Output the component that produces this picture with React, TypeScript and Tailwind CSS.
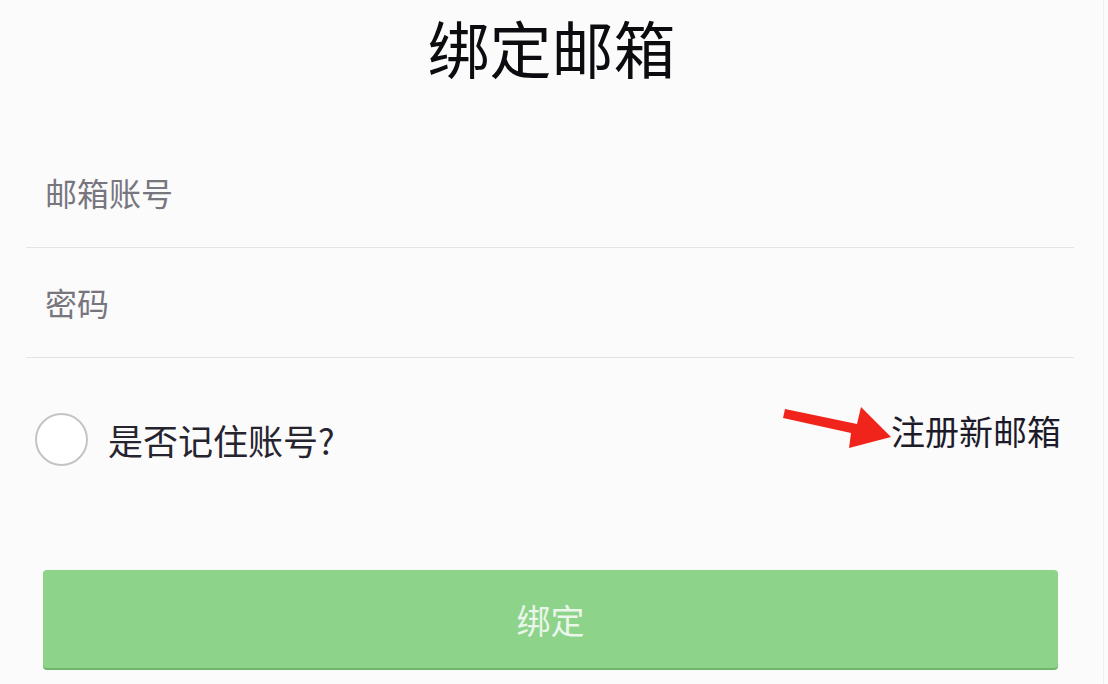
export default function App() {
  return (
    <main
      className="h-[684px] w-full overflow-hidden bg-[#fbfbfc]"
      style={{ fontFamily: '"Noto Sans CJK SC", "Noto Sans", sans-serif' }}
    >
      <div className="mr-[4px] h-full border-r border-[#efeff1]">
        <header className="flex h-[138px] justify-center pt-[7px]">
          <h1 className="text-[62px] leading-[80px] font-normal text-[#0c0c10]">绑定邮箱</h1>
        </header>

        <section className="mx-[26px] w-[1048px]">
          <div className="flex h-[110px] items-center border-b border-[#e4e4e7] pb-[2px] pl-[19px]">
            <input
              placeholder="邮箱账号"
              className="w-full bg-transparent text-[32px] text-[#77767f] outline-none placeholder:text-[#77767f]"
            />
          </div>
          <div className="flex h-[110px] items-center border-b border-[#e4e4e7] pb-[2px] pl-[19px]">
            <input
              type="text"
              placeholder="密码"
              className="w-full bg-transparent text-[32px] text-[#77767f] outline-none placeholder:text-[#77767f]"
            />
          </div>
        </section>

        <section className="flex h-[204px] items-start justify-between pt-[55px] pl-[35px] pr-[42px]">
          <label className="flex items-center gap-[20px]">
            <span className="h-[53px] w-[53px] rounded-full border-2 border-[#c4c4c6] bg-white" />
            <span className="text-[35px] leading-[40px] text-[#26242f]">是否记住账号?</span>
          </label>
          <div className="relative -mt-[2px] flex items-center">
            <svg
              className="absolute -left-[108px] top-[-5px]"
              width="110"
              height="42"
              viewBox="0 0 110 42"
            >
              <polygon
                points="2,3 0,12 68,27 66,42 108,31 78,1 74,18"
                fill="#f0241a"
              />
            </svg>
            <span className="text-[34px] leading-[40px] text-[#1d1b2a]">注册新邮箱</span>
          </div>
        </section>

        <div className="px-[43px] pt-[8px]">
          <button className="flex h-[98px] w-[1015px] items-center justify-center rounded-[4px] bg-[#8dd38a] text-[34px] text-[#eaf6ea] shadow-[0_2px_0_#6fb56c]">
            绑定
          </button>
        </div>
      </div>
    </main>
  )
}
